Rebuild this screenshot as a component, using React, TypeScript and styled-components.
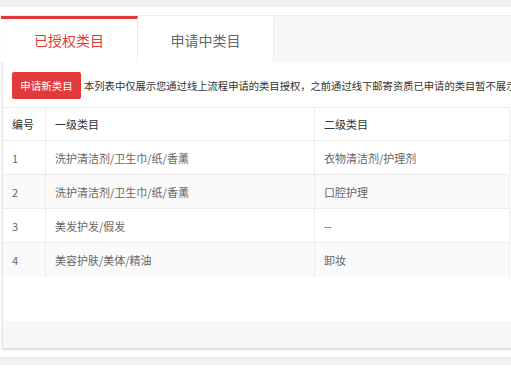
import React from 'react'
import styled, { createGlobalStyle } from 'styled-components'

const GlobalStyle = createGlobalStyle`
  html, body {
    margin: 0;
    padding: 0;
    background: #ffffff;
    font-family: "Noto Sans CJK SC", "Noto Sans", "Liberation Sans", sans-serif;
    overflow: hidden;
  }
`

const RED = '#e23a3a'

const Page = styled.div`
  width: 511px;
  height: 370px;
  display: flex;
  flex-direction: column;
`

const GrayStrip = styled.div<{ $lined?: boolean }>`
  height: 7px;
  background: #f0f0f0;
  flex-shrink: 0;
  border-top: ${(p) => (p.$lined ? '1px solid #e4e4e4' : 'none')};
`

const Gap = styled.div<{ $h: number }>`
  height: ${(p) => p.$h}px;
  flex-shrink: 0;
`

const Card = styled.div`
  margin-left: 2px;
  width: 515px;
  border-left: 1px solid #e6e6e6;
  background: #fff;
  box-shadow: 0 2px 2px rgba(0, 0, 0, 0.15);
  display: flex;
  flex-direction: column;
  flex-shrink: 0;
`

const TabBar = styled.div`
  display: flex;
  height: 46px;
  background: #f7f7f7;
  border-top: 1px solid #ececec;
  margin-top: -1px;
  margin-left: -2px;
`

const Tab = styled.div<{ $active?: boolean }>`
  width: ${(p) => (p.$active ? 137 : 136)}px;
  box-sizing: border-box;
  background: #fff;
  border-top: 3px solid ${(p) => (p.$active ? RED : 'transparent')};
  border-right: 1px solid #ececec;
  display: flex;
  align-items: center;
  justify-content: center;
  font-size: 14px;
  color: ${(p) => (p.$active ? RED : '#666')};
  padding-bottom: 2px;
`

const Toolbar = styled.div`
  display: flex;
  align-items: center;
  gap: 3px;
  padding: 10px 0 8px 9px;
  white-space: nowrap;
  overflow: hidden;
  width: 500px;
`

const Button = styled.button`
  width: 69px;
  height: 27px;
  border: none;
  border-radius: 2px;
  background: ${RED};
  color: #fff;
  font-family: inherit;
  font-size: 10.5px;
  padding: 0;
  flex-shrink: 0;
`

const Note = styled.span`
  font-size: 10.3px;
  color: #333;
`

const Table = styled.div`
  width: 507px;
  border-top: 1px solid #ececec;
  border-right: 1px solid #ececec;
  box-sizing: border-box;
`

const Row = styled.div<{ $striped?: boolean; $head?: boolean; $last?: boolean }>`
  display: grid;
  grid-template-columns: 43px 269px 1fr;
  height: ${(p) => (p.$head ? 33 : 34)}px;
  background: ${(p) => (p.$striped ? '#fafafa' : '#fff')};
  border-bottom: ${(p) => (p.$last ? 'none' : '1px solid #ececec')};
  box-sizing: border-box;
  font-size: 11px;
  color: ${(p) => (p.$head ? '#333' : '#666')};
`

const Cell = styled.div`
  display: flex;
  align-items: center;
  padding-left: 9px;
  border-right: 1px solid #ececec;
  &:last-child {
    border-right: none;
  }
`

const Empty = styled.div`
  height: 44px;
`

const Footer = styled.div`
  height: 27px;
  background: #f7f7f7;
`

const rows = [
  ['1', '洗护清洁剂/卫生巾/纸/香薰', '衣物清洁剂/护理剂'],
  ['2', '洗护清洁剂/卫生巾/纸/香薰', '口腔护理'],
  ['3', '美发护发/假发', '--'],
  ['4', '美容护肤/美体/精油', '卸妆'],
]

const App = () => {
  return (
    <Page>
      <GlobalStyle />
      <GrayStrip />
      <Gap $h={9} />
      <Card>
        <TabBar>
          <Tab $active>已授权类目</Tab>
          <Tab>申请中类目</Tab>
        </TabBar>
        <Toolbar>
          <Button>申请新类目</Button>
          <Note>本列表中仅展示您通过线上流程申请的类目授权，之前通过线下邮寄资质已申请的类目暂不展示</Note>
        </Toolbar>
        <Table>
          <Row $head>
            <Cell>编号</Cell>
            <Cell>一级类目</Cell>
            <Cell>二级类目</Cell>
          </Row>
          {rows.map((r, i) => (
            <Row key={r[0]} $striped={i % 2 === 1} $last={i === rows.length - 1}>
              <Cell>{r[0]}</Cell>
              <Cell>{r[1]}</Cell>
              <Cell>{r[2]}</Cell>
            </Row>
          ))}
        </Table>
        <Empty />
        <Footer />
      </Card>
      <Gap $h={9} />
      <GrayStrip $lined />
    </Page>
  )
}

export default App
